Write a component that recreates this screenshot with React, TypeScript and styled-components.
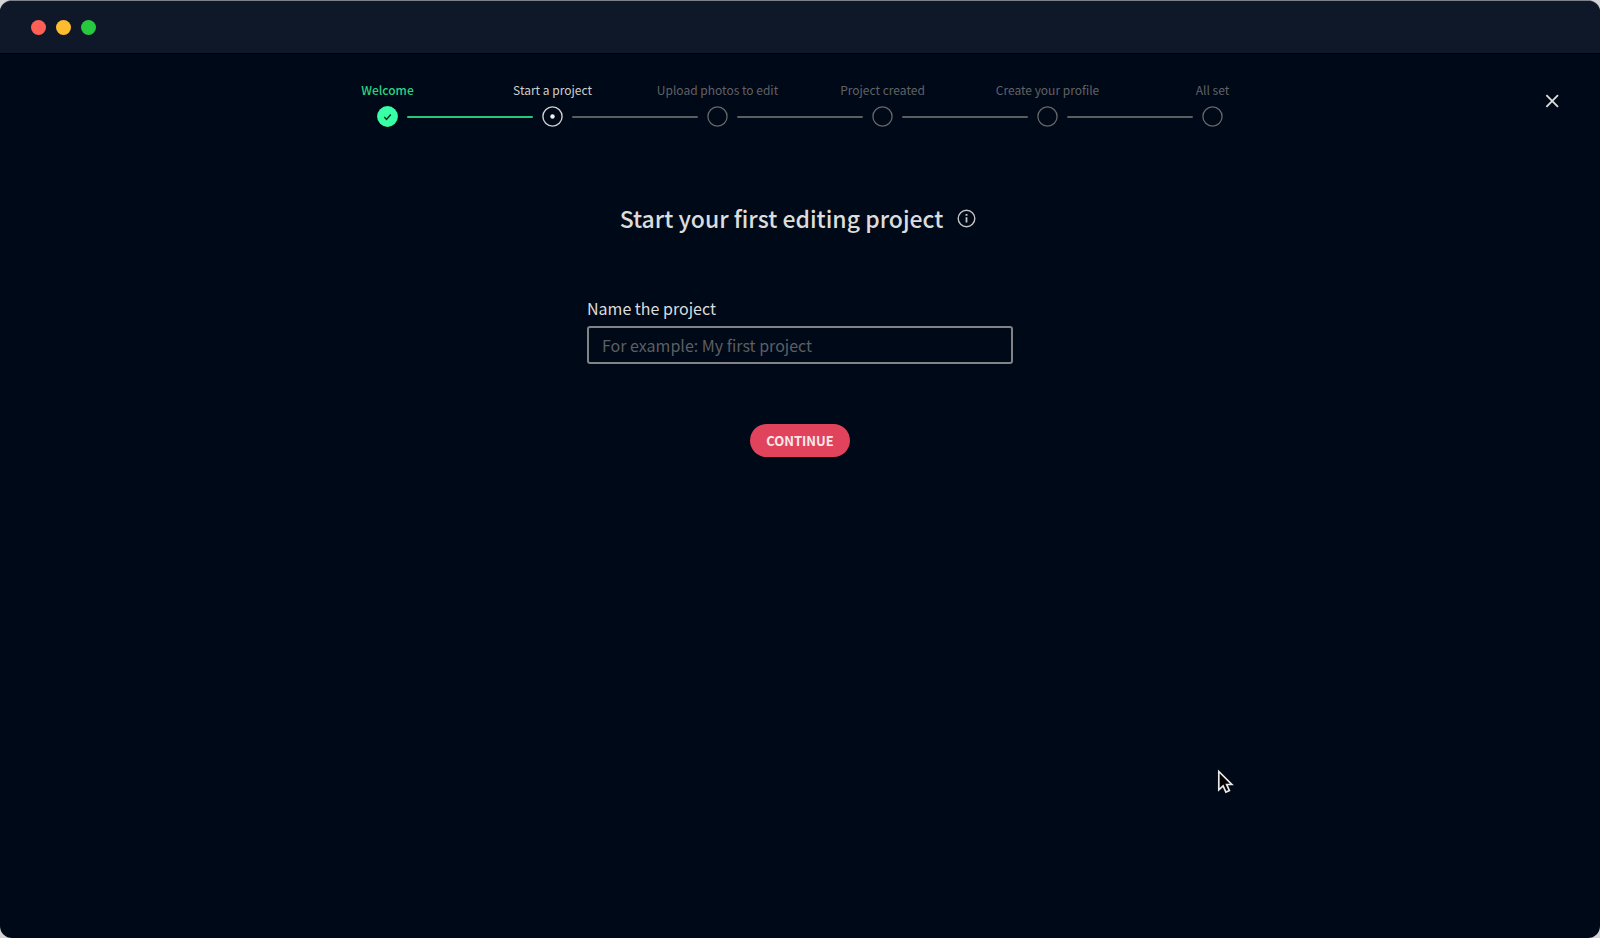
import React from "react";
import styled, { createGlobalStyle } from "styled-components";

type StepState = "done" | "current" | "upcoming";

const GlobalStyle = createGlobalStyle`
  *, *::before, *::after { box-sizing: border-box; }
  html { background: #d4d4d4; }
  body {
    margin: 0;
    font-family: "Noto Sans CJK SC", "Noto Sans", sans-serif;
    color: #dcdcdc;
  }
`;

const Window = styled.div`
  position: relative;
  display: flex;
  flex-direction: column;
  min-height: 100vh;
  overflow: hidden;
  background: #000917;
  border-top: 1px solid #7d828a;
  border-radius: 12px;
`;

const TitleBar = styled.header`
  display: flex;
  align-items: center;
  gap: 10px;
  height: 53px;
  padding: 0 31px;
  background: #0f1828;
  border-bottom: 1px solid #000000;
`;

const WindowButton = styled.button<{ $color: string }>`
  width: 15px;
  height: 15px;
  padding: 0;
  border: 0;
  border-radius: 50%;
  background: ${(p) => p.$color};
`;

const TopRow = styled.div`
  display: grid;
  grid-template-columns: 1fr minmax(0, 990px) 1fr;
  padding-top: 27px;
`;

const Steps = styled.ol`
  grid-column: 2;
  display: grid;
  grid-template-columns: repeat(6, 1fr);
  margin: 0;
  padding: 0;
  list-style: none;
`;

const stepColor: Record<StepState, string> = {
  done: "#2bd284",
  current: "#d0d0d0",
  upcoming: "#606266",
};

const Step = styled.li<{ $state: StepState }>`
  display: flex;
  flex-direction: column;
  align-items: center;
  gap: 7px;
  color: ${(p) => stepColor[p.$state]};
  font-size: 12px;
  font-weight: ${(p) => (p.$state === "done" ? 500 : 400)};
  line-height: 18px;
  white-space: nowrap;
`;

const Track = styled.div`
  display: grid;
  grid-template-columns: 1fr 21px 1fr;
  align-items: center;
  width: 100%;
`;

const Marker = styled.svg`
  grid-column: 2;
  display: block;
  width: 21px;
  height: 21px;
`;

const Connector = styled.span<{ $done: boolean }>`
  height: 2px;
  margin-left: 9px;
  margin-right: -63px;
  border-radius: 1px;
  background: ${(p) => (p.$done ? "#24c97b" : "#5c5d60")};
`;

const CloseButton = styled.button`
  justify-self: end;
  align-self: start;
  display: grid;
  place-items: center;
  width: 24px;
  height: 24px;
  margin: 8px 36px 0 0;
  padding: 0;
  border: 0;
  background: none;
  color: #dcdcdc;
`;

const Main = styled.main`
  display: flex;
  flex-direction: column;
  align-items: center;
  padding-top: 71px;
`;

const Heading = styled.div`
  display: flex;
  align-items: center;
  gap: 14px;
  padding-right: 4px;
`;

const Title = styled.h1`
  margin: 0;
  font-size: 23px;
  font-weight: 500;
  line-height: 40px;
`;

const InfoButton = styled.button`
  display: block;
  padding: 0;
  border: 0;
  background: none;
  color: #c4c4c4;
  svg { display: block; }
`;

const Form = styled.form`
  display: flex;
  flex-direction: column;
  width: 426px;
  max-width: 100%;
  margin-top: 58px;
`;

const Label = styled.label`
  font-size: 16px;
  line-height: 24px;
`;

const TextInput = styled.input`
  height: 38px;
  margin-top: 6px;
  padding: 0 13px 1px;
  border: 2px solid #828386;
  border-radius: 3px;
  background: transparent;
  color: #dcdcdc;
  font-family: inherit;
  font-size: 16px;
  &::placeholder { color: #5c5f64; opacity: 1; }
`;

const ContinueButton = styled.button`
  align-self: center;
  height: 33px;
  margin-top: 60px;
  padding: 0 16px;
  border: 0;
  border-radius: 17px;
  background: #e2435c;
  color: #f8e9eb;
  font-family: inherit;
  font-size: 13px;
  font-weight: 700;
`;

const Pointer = styled.svg`
  position: absolute;
  left: 1217px;
  top: 768px;
  width: 18px;
  height: 26px;
  pointer-events: none;
`;

const steps: { label: string; state: StepState }[] = [
  { label: "Welcome", state: "done" },
  { label: "Start a project", state: "current" },
  { label: "Upload photos to edit", state: "upcoming" },
  { label: "Project created", state: "upcoming" },
  { label: "Create your profile", state: "upcoming" },
  { label: "All set", state: "upcoming" },
];

function StepMarker({ state }: { state: StepState }) {
  return (
    <Marker viewBox="0 0 21 21" fill="none" aria-hidden="true">
      {state === "done" && (
        <>
          <circle cx="10.5" cy="10.5" r="10.4" fill="#38ffa6" />
          <path d="M7.3 11.1l2.2 2.3 4.3-5" stroke="#04301f" strokeWidth="1.5" />
        </>
      )}
      {state === "current" && (
        <>
          <circle cx="10.5" cy="10.5" r="9.6" stroke="#d0d0d0" strokeWidth="1.4" />
          <circle cx="10.5" cy="10.5" r="2.2" fill="#f0f0f0" />
        </>
      )}
      {state === "upcoming" && (
        <circle cx="10.5" cy="10.5" r="9.6" stroke="#66676a" strokeWidth="1.3" />
      )}
    </Marker>
  );
}

export default function App() {
  return (
    <Window>
      <GlobalStyle />
      <TitleBar>
        <WindowButton type="button" aria-label="Close window" $color="#ff5f57" />
        <WindowButton type="button" aria-label="Minimize window" $color="#febc2e" />
        <WindowButton type="button" aria-label="Zoom window" $color="#28c840" />
      </TitleBar>
      <TopRow>
        <Steps>
          {steps.map((step, i) => (
            <Step
              key={step.label}
              $state={step.state}
              aria-current={step.state === "current" ? "step" : undefined}
            >
              <span>{step.label}</span>
              <Track>
                <StepMarker state={step.state} />
                {i < steps.length - 1 && <Connector $done={step.state === "done"} />}
              </Track>
            </Step>
          ))}
        </Steps>
        <CloseButton type="button" aria-label="Close">
          <svg width="14" height="14" viewBox="0 0 14 14" stroke="currentColor" strokeWidth="1.9">
            <path d="M1.4 1.2l11.6 11.6M13 1.2L1.4 12.8" />
          </svg>
        </CloseButton>
      </TopRow>
      <Main>
        <Heading>
          <Title>Start your first editing project</Title>
          <InfoButton type="button" aria-label="More information">
            <svg width="19" height="19" viewBox="0 0 19 19" fill="none" stroke="currentColor">
              <circle cx="9.5" cy="9.5" r="8.3" strokeWidth="1.4" />
              <path d="M9.5 8.2v5.4" strokeWidth="1.8" />
              <path d="M9.5 5v1.8" strokeWidth="2" />
            </svg>
          </InfoButton>
        </Heading>
        <Form onSubmit={(e) => e.preventDefault()}>
          <Label htmlFor="project-name">Name the project</Label>
          <TextInput id="project-name" type="text" placeholder="For example: My first project" />
          <ContinueButton type="submit">CONTINUE</ContinueButton>
        </Form>
      </Main>
      <Pointer viewBox="0 0 18 26" aria-hidden="true">
        <path
          d="M1.8 2.5v18.3l4.3-3.9 2.8 6.2 3.5-1.5-2.7-6.1h5.1z"
          fill="#000"
          stroke="#e8e8e8"
          strokeWidth="1.7"
        />
      </Pointer>
    </Window>
  );
}
